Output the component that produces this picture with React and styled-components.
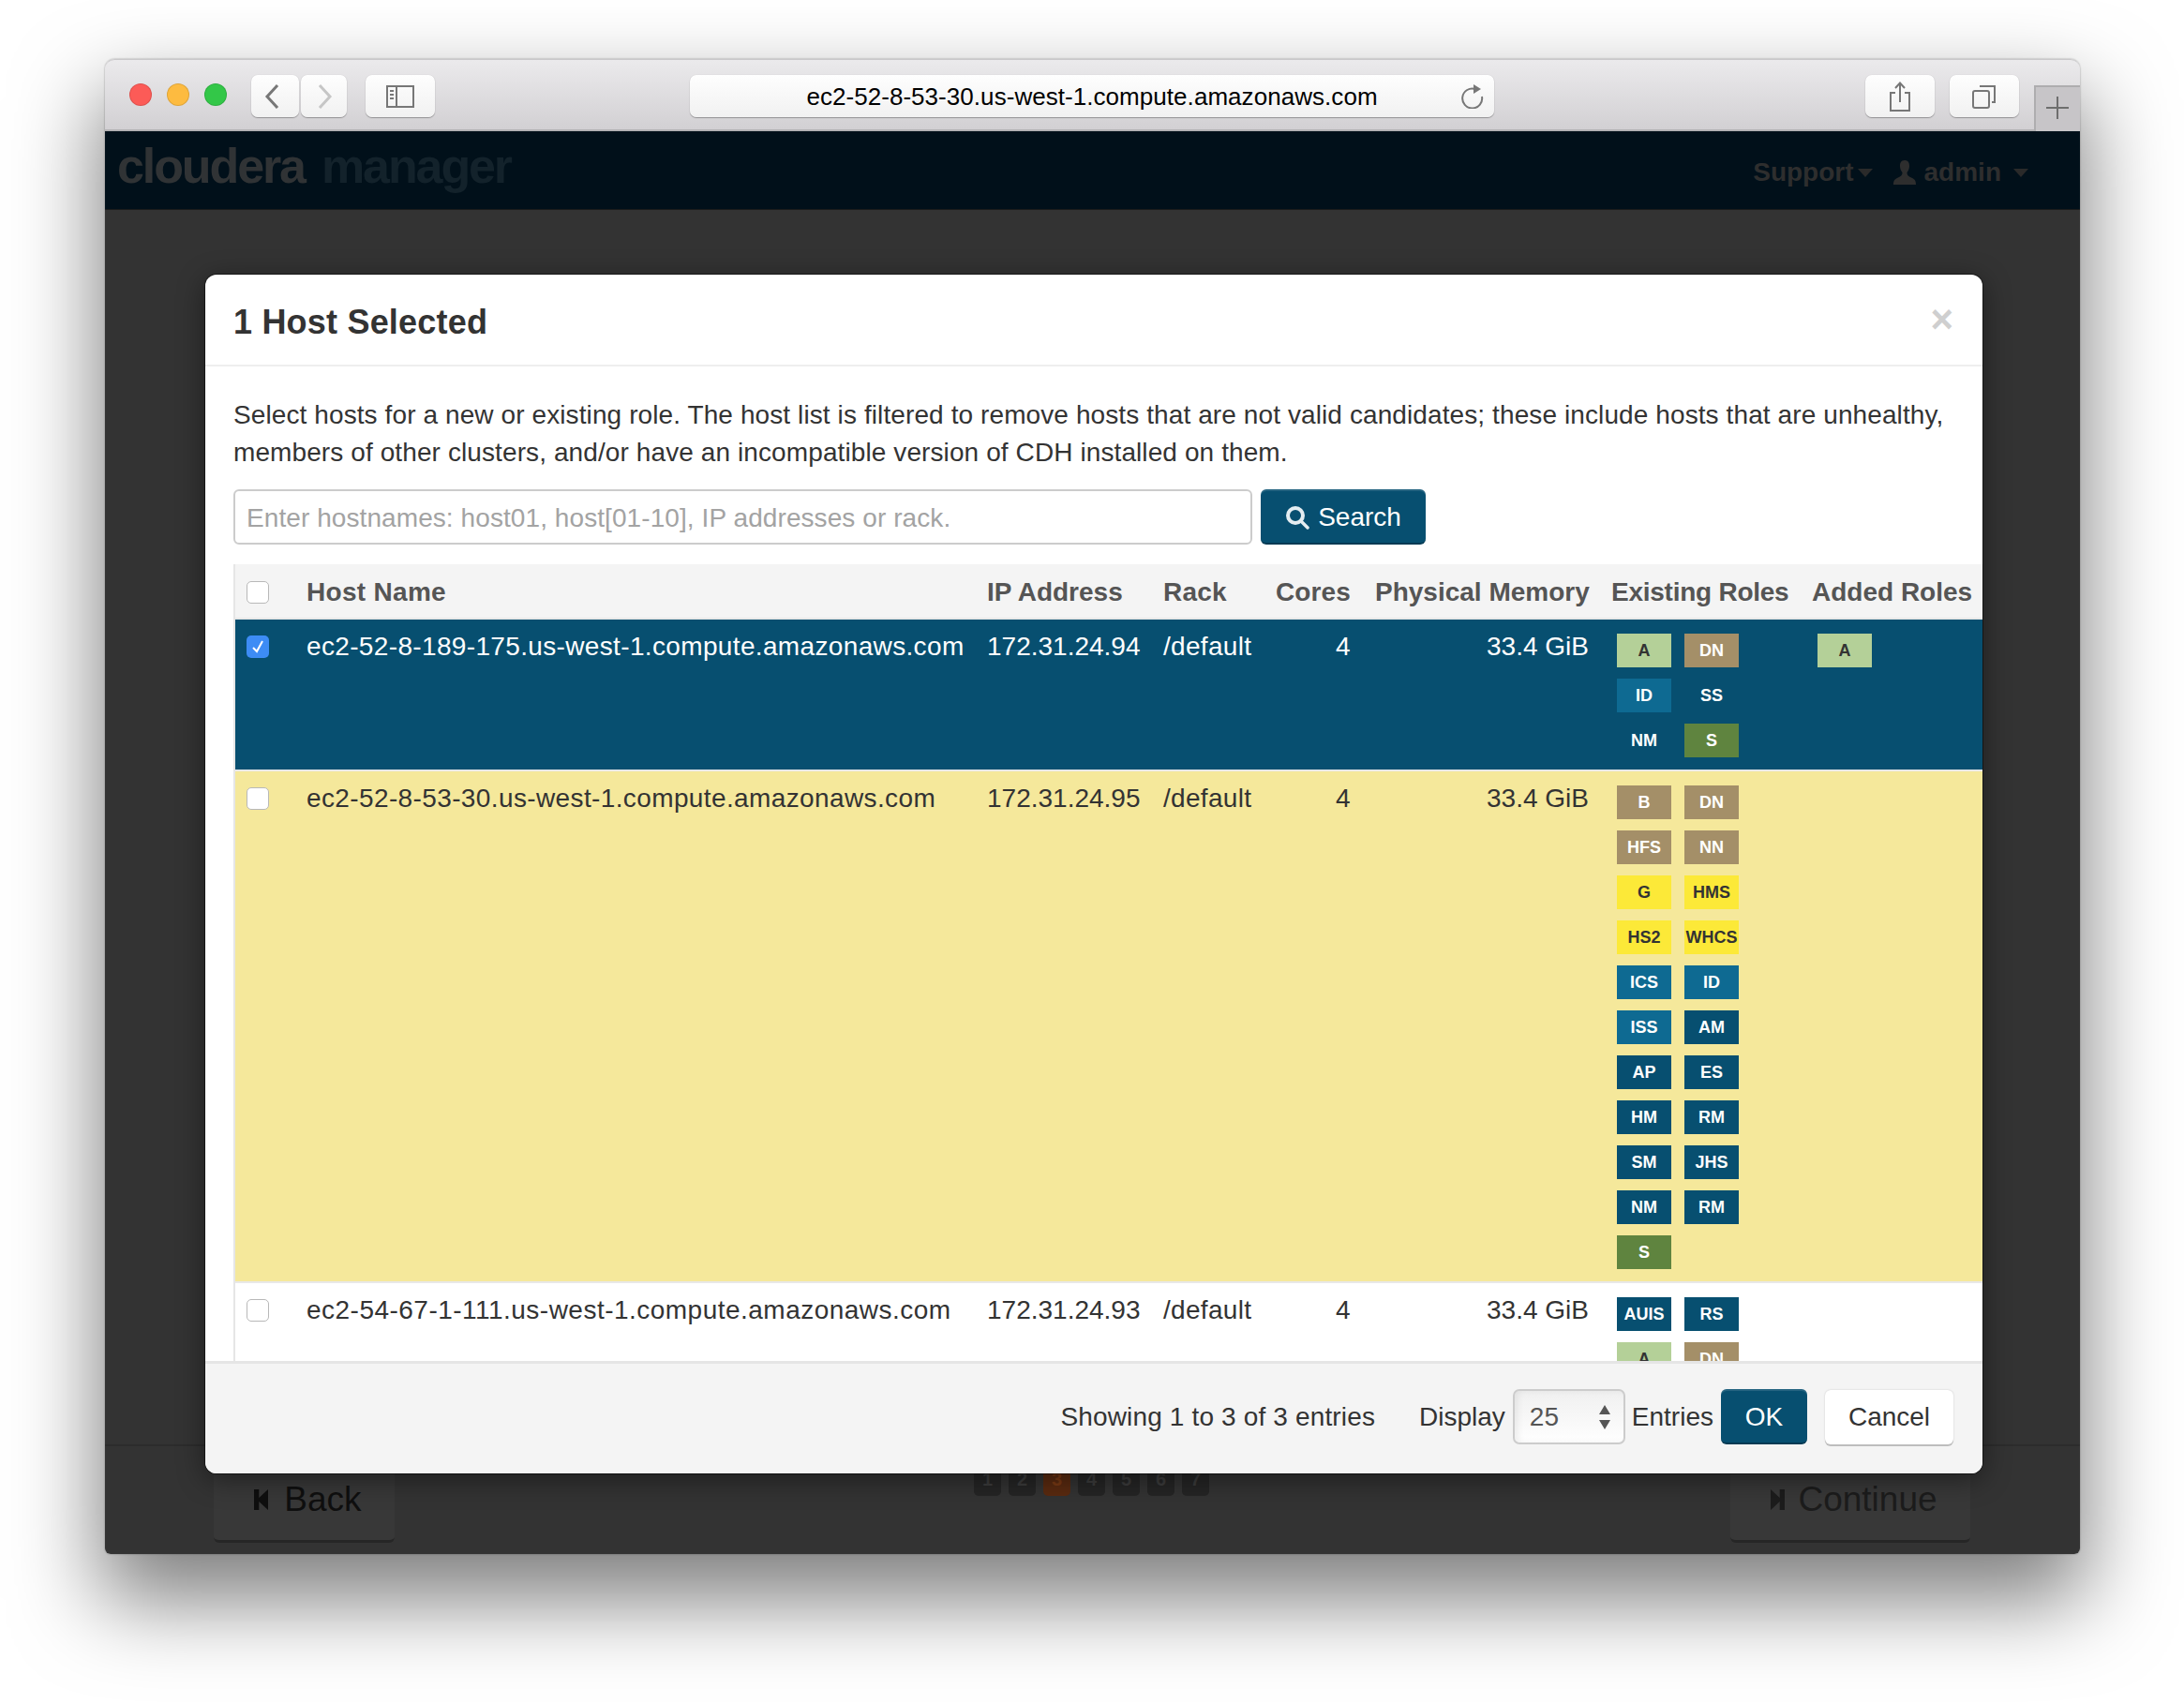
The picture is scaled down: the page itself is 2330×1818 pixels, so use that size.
import React from 'react';
import styled, { createGlobalStyle, css } from 'styled-components';

const colors = {
  navy: '#074f70',
  teal: '#0e6a92',
  tan: '#a48f68',
  lime: '#b4d098',
  moss: '#5f843f',
  yellow: '#fce938',
  cream: '#f5e89b',
  text: '#333333',
  panel: '#f4f4f4',
};

const GlobalStyle = createGlobalStyle`
  html, body {
    margin: 0;
    background: #ffffff;
    font-family: "Liberation Sans", Arial, sans-serif;
    overflow: hidden;
  }
  * {
    box-sizing: border-box;
  }
`;

const Stage = styled.div`
  width: 2330px;
  height: 1818px;
  padding: 63px 111px 0 112px;
  overflow: hidden;
`;

const Window = styled.div`
  width: 2107px;
  height: 1595px;
  display: flex;
  flex-direction: column;
  border-radius: 10px 10px 6px 6px;
  box-shadow: 0 44px 90px 6px rgba(0, 0, 0, 0.5), 0 0 2px rgba(0, 0, 0, 0.4);
  overflow: visible;
`;

// Safari chrome
const TitleBar = styled.div`
  height: 77px;
  flex: none;
  display: flex;
  align-items: flex-start;
  padding-top: 16px;
  padding-left: 26px;
  background: linear-gradient(#ebeaec, #d2d0d3);
  border-top: 1px solid #c9c8ca;
  border-bottom: 2px solid #b3b2b4;
  border-radius: 10px 10px 0 0;
`;

const Light = styled.span`
  width: 24px;
  height: 24px;
  margin-top: 9px;
  margin-right: 16px;
  border-radius: 50%;
  background: ${(p) => p.$color};
  border: 1px solid rgba(0, 0, 0, 0.12);
`;

const ToolButton = styled.div`
  height: 45px;
  width: ${(p) => p.$w}px;
  flex: none;
  display: flex;
  align-items: center;
  justify-content: ${(p) => p.$justify || 'center'};
  padding: 0 ${(p) => p.$pad || 0}px;
  margin-left: ${(p) => p.$ml || 0}px;
  background: linear-gradient(#fefefe, #f1f1f1);
  border-radius: 7px;
  box-shadow: 0 1px 1px rgba(0, 0, 0, 0.3), 0 0 1px rgba(0, 0, 0, 0.2);
`;

const UrlBar = styled(ToolButton)`
  position: relative;
  padding-top: 2px;
  font-size: 26px;
  letter-spacing: 0.05px;
  color: #000000;
`;

const ReloadSlot = styled.span`
  position: absolute;
  right: 11px;
  top: 9px;
  display: flex;
`;

const NewTab = styled.div`
  width: 49px;
  height: 49px;
  flex: none;
  margin-left: 16px;
  align-self: flex-end;
  margin-bottom: -2px;
  padding-bottom: 4px;
  padding-right: 2px;
  display: flex;
  align-items: center;
  justify-content: center;
  background: #c7c5c8;
  border-top: 2px solid #aeadaf;
  border-left: 2px solid #aeadaf;
`;

const Page = styled.div`
  position: relative;
  flex: 1;
  min-height: 0;
  display: flex;
  flex-direction: column;
  background: #333333;
  border-radius: 0 0 6px 6px;
`;

const Nav = styled.div`
  height: 84px;
  flex: none;
  display: flex;
  align-items: center;
  justify-content: space-between;
  padding: 0 55px 0 13px;
  background: #01101a;
  border-bottom: 1px solid #1b1b1b;
`;

const Logo = styled.div`
  display: flex;
  align-items: baseline;
  gap: 18px;
  font-size: 52px;
  font-weight: 700;
  letter-spacing: -2.1px;
  line-height: 60px;
  margin-top: -10px;
`;

const LogoWord = styled.span`
  color: ${(p) => p.$color};
`;

const NavMenu = styled.div`
  display: flex;
  align-items: center;
  margin-top: 5px;
  font-size: 28px;
  font-weight: 700;
  color: #2e2e2e;
`;

const NavCaret = styled.span`
  width: 0;
  height: 0;
  margin-left: ${(p) => p.$ml}px;
  margin-right: ${(p) => p.$mr}px;
  border-left: 8px solid transparent;
  border-right: 8px solid transparent;
  border-top: 9px solid #2a2a2a;
`;

const NavIcon = styled.svg`
  margin-right: 9px;
`;

const Spacer = styled.div`
  flex: 1;
`;

const BottomBar = styled.div`
  height: 117px;
  flex: none;
  display: flex;
  align-items: flex-start;
  padding: 19px 117px 0 116px;
  border-top: 2px solid #2c2c2c;
`;

const WizardButton = styled.div`
  height: 84px;
  width: ${(p) => p.$w}px;
  display: flex;
  align-items: center;
  justify-content: center;
  gap: ${(p) => p.$gap}px;
  padding-bottom: 6px;
  padding-left: ${(p) => p.$pl || 0}px;
  background: #383838;
  border-radius: 6px;
  border-bottom: 3px solid #262626;
  font-size: 37px;
  color: ${(p) => p.$color};
`;

const Pager = styled.div`
  display: flex;
  gap: 8px;
  margin-left: 618px;
  margin-right: auto;
`;

const PagerDot = styled.span`
  width: 29px;
  height: 34px;
  padding-top: 5px;
  text-align: center;
  font-size: 20px;
  font-weight: 700;
  border-radius: 5px;
  color: ${(p) => (p.$active ? '#7a3a14' : '#3c3c3c')};
  background: ${(p) => (p.$active ? '#5a2a10' : '#252525')};
`;

// modal sits over the dimmed page
const Modal = styled.div`
  position: absolute;
  left: 107px;
  top: 153px;
  width: 1896px;
  height: 1279px;
  display: flex;
  flex-direction: column;
  background: #ffffff;
  border-radius: 12px;
  box-shadow: 0 0 0 1px rgba(0, 0, 0, 0.45), 0 6px 30px rgba(0, 0, 0, 0.45);
  overflow: hidden;
`;

const ModalHeader = styled.div`
  height: 98px;
  flex: none;
  display: flex;
  align-items: center;
  justify-content: space-between;
  padding: 6px 31px 0 30px;
  border-bottom: 2px solid #eeeeee;
`;

const ModalTitle = styled.h3`
  margin: 0;
  font-size: 36px;
  font-weight: 700;
  letter-spacing: 0.2px;
  color: ${colors.text};
`;

const Close = styled.span`
  font-size: 42px;
  font-weight: 700;
  line-height: 1;
  color: #cfcfcf;
  margin-top: -6px;
`;

const Intro = styled.p`
  margin: 0;
  padding: 32px 30px 19px;
  font-size: 28px;
  line-height: 40px;
  letter-spacing: 0.1px;
  color: ${colors.text};
`;

const SearchRow = styled.div`
  display: flex;
  gap: 9px;
  padding: 0 30px;
  margin-bottom: 21px;
`;

const SearchInput = styled.input`
  width: 1087px;
  height: 59px;
  padding: 2px 12px 0;
  font: 28px "Liberation Sans", Arial, sans-serif;
  letter-spacing: 0.08px;
  border: 2px solid #cccccc;
  border-radius: 6px;
  outline: none;
  &::placeholder {
    color: #a3a3a3;
    opacity: 1;
  }
`;

const PrimaryButton = styled.button`
  height: 59px;
  width: ${(p) => p.$w}px;
  display: flex;
  align-items: center;
  justify-content: center;
  gap: 9px;
  padding: 2px 0 0;
  font: 28px "Liberation Sans", Arial, sans-serif;
  color: #ffffff;
  background: ${colors.navy};
  border: none;
  border-bottom: 2px solid #043a53;
  border-radius: 6px;
  box-shadow: inset 0 2px 0 rgba(255, 255, 255, 0.12);
`;

const Table = styled.div`
  flex: 1;
  min-height: 0;
  margin-left: 30px;
  border-left: 2px solid #e6e6e6;
  overflow: hidden;
`;

const columns = css`
  display: grid;
  grid-template-columns: 40px 702px 163px 97px 82px 228px 190px 1fr;
  column-gap: 24px;
  padding-left: 12px;
`;

const HeadRow = styled.div`
  ${columns}
  height: 59px;
  align-items: center;
  background: ${colors.panel};
  font-size: 28px;
  font-weight: 700;
  color: #555555;
  white-space: nowrap;
`;

const HeadCell = styled.div`
  letter-spacing: ${(p) => p.$ls || 0}px;
  padding-left: ${(p) => p.$pl || 0}px;
`;

const Row = styled.div`
  ${columns}
  padding-top: 15px;
  padding-bottom: 13px;
  margin-top: ${(p) => (p.$first ? 0 : 2)}px;
  font-size: 28px;
  line-height: 28px;
  white-space: nowrap;
  background: ${(p) => p.$bg};
  color: ${(p) => p.$fg};
  box-shadow: 0 -2px 0 #e8e8e8;
`;

const HostCell = styled.div`
  letter-spacing: ${(p) => p.$ls}px;
`;

const RackCell = styled.div`
  padding-left: 1px;
  letter-spacing: 0.3px;
`;

const Right = styled.div`
  text-align: right;
`;

const CoreCell = styled.div`
  padding-left: 64px;
`;

const Check = styled.span`
  display: flex;
  align-items: center;
  justify-content: center;
  width: 24px;
  height: 24px;
  margin-top: ${(p) => p.$mt || 0}px;
  border-radius: 5px;
  background: ${(p) => (p.$on ? '#3d8cf5' : '#ffffff')};
  border: ${(p) => (p.$on ? 'none' : '1px solid #b8b8b8')};
`;

const BadgeGrid = styled.div`
  display: grid;
  grid-template-columns: 58px 58px;
  column-gap: 14px;
  row-gap: 12px;
  margin-left: 6px;
  align-content: start;
`;

const Badge = styled.span`
  height: 36px;
  display: flex;
  align-items: center;
  justify-content: center;
  padding-bottom: 1px;
  font-size: 18px;
  line-height: 1;
  font-weight: 700;
  color: ${(p) => (p.$kind === 'lime' || p.$kind === 'yellow' ? '#333333' : '#ffffff')};
  background: ${(p) => colors[p.$kind]};
`;

const Footer = styled.div`
  height: 120px;
  flex: none;
  display: flex;
  align-items: center;
  justify-content: flex-end;
  padding-right: 31px;
  padding-bottom: 4px;
  background: ${colors.panel};
  border-top: 3px solid #e5e5e5;
  font-size: 28px;
  color: ${colors.text};
`;

const FooterText = styled.span`
  margin-right: ${(p) => p.$mr}px;
  letter-spacing: ${(p) => p.$ls || 0}px;
`;

const PageSize = styled.div`
  width: 120px;
  height: 59px;
  margin-right: 7px;
  padding-left: 16px;
  padding-right: 13px;
  display: flex;
  align-items: center;
  justify-content: space-between;
  color: #555555;
  background: linear-gradient(#f0f0f0, #f7f7f7 50%, #ffffff);
  border: 2px solid #cccccc;
  border-radius: 7px;
  box-shadow: inset 4px 0 6px rgba(0, 0, 0, 0.06);
`;

const CancelButton = styled.button`
  width: 137px;
  height: 58px;
  margin-left: 19px;
  padding: 0;
  font: 28px "Liberation Sans", Arial, sans-serif;
  color: ${colors.text};
  background: #ffffff;
  border: none;
  border-radius: 6px;
  box-shadow: 0 2px 0 #bdbdbd, 0 0 2px rgba(0, 0, 0, 0.2);
`;

const hosts = [
  {
    name: 'ec2-52-8-189-175.us-west-1.compute.amazonaws.com',
    ip: '172.31.24.94',
    bg: colors.navy,
    fg: '#ffffff',
    ls: 0.35,
    roles: [['A', 'lime'], ['DN', 'tan'], ['ID', 'teal'], ['SS', 'navy'], ['NM', 'navy'], ['S', 'moss']],
    added: [['A', 'lime']],
    checked: true,
  },
  {
    name: 'ec2-52-8-53-30.us-west-1.compute.amazonaws.com',
    ip: '172.31.24.95',
    bg: colors.cream,
    fg: colors.text,
    ls: 0.38,
    roles: [
      ['B', 'tan'], ['DN', 'tan'], ['HFS', 'tan'], ['NN', 'tan'],
      ['G', 'yellow'], ['HMS', 'yellow'], ['HS2', 'yellow'], ['WHCS', 'yellow'],
      ['ICS', 'teal'], ['ID', 'teal'], ['ISS', 'teal'], ['AM', 'navy'],
      ['AP', 'navy'], ['ES', 'navy'], ['HM', 'navy'], ['RM', 'navy'],
      ['SM', 'navy'], ['JHS', 'navy'], ['NM', 'navy'], ['RM', 'navy'], ['S', 'moss'],
    ],
    added: [],
  },
  {
    name: 'ec2-54-67-1-111.us-west-1.compute.amazonaws.com',
    ip: '172.31.24.93',
    bg: '#ffffff',
    fg: colors.text,
    ls: 0.48,
    roles: [['AUIS', 'navy'], ['RS', 'navy'], ['A', 'lime'], ['DN', 'tan']],
    added: [],
  },
];

const Chevron = ({ d, color }) => (
  <svg width="18" height="26" viewBox="0 0 18 26">
    <path d={d} fill="none" stroke={color} strokeWidth="3" />
  </svg>
);

const StepIcon = ({ d, color }) => (
  <svg width="15" height="22" viewBox="0 0 17 22" fill={color} preserveAspectRatio="none">
    <path d={d} />
  </svg>
);

const App = () => (
  <Stage>
    <GlobalStyle />
    <Window>
      <TitleBar>
        <Light $color="#fc5b57" />
        <Light $color="#fdbb40" />
        <Light $color="#33c748" />
        <ToolButton $w={51} $ml={10} $justify="flex-start" $pad={13}>
          <Chevron d="M15 1 L4 13 L15 25" color="#777777" />
        </ToolButton>
        <ToolButton $w={49} $ml={2} $justify="flex-end" $pad={14}>
          <Chevron d="M3 1 L14 13 L3 25" color="#c6c6c6" />
        </ToolButton>
        <ToolButton $w={74} $ml={20}>
          <svg width="30" height="24" viewBox="0 0 30 24" fill="none" stroke="#777777" strokeWidth="2">
            <rect x="1" y="1" width="28" height="22" />
            <path d="M11 1 V23" />
            <path d="M4 6 H8 M4 10 H8 M4 14 H8" />
          </svg>
        </ToolButton>
        <UrlBar $w={858} $ml={272}>
          ec2-52-8-53-30.us-west-1.compute.amazonaws.com
          <ReloadSlot>
            <svg width="24" height="27" viewBox="0 0 24 27" fill="none" stroke="#777777" strokeWidth="2">
              <path d="M15 6 A10.5 10.5 0 1 0 22 14" />
              <path d="M13 1 L21 6 L13 11 Z" fill="#777777" stroke="none" />
            </svg>
          </ReloadSlot>
        </UrlBar>
        <ToolButton $w={74} $ml={396}>
          <svg width="24" height="32" viewBox="0 0 24 32" fill="none" stroke="#777777" strokeWidth="2">
            <path d="M7 12 H2 V31 H22 V12 H17" />
            <path d="M12 22 V2 M7 7 L12 1.5 L17 7" />
          </svg>
        </ToolButton>
        <ToolButton $w={74} $ml={16}>
          <svg width="26" height="26" viewBox="0 0 26 26" fill="none" stroke="#777777" strokeWidth="2">
            <rect x="1" y="7" width="17" height="18" rx="2" />
            <path d="M8 2 H24 V19 H21" />
          </svg>
        </ToolButton>
        <NewTab>
          <svg width="24" height="24" viewBox="0 0 24 24" stroke="#6e6e6e" strokeWidth="2">
            <path d="M12 0 V24 M0 12 H24" />
          </svg>
        </NewTab>
      </TitleBar>
      <Page>
        <Nav>
          <Logo>
            <LogoWord $color="#303335">cloudera</LogoWord>
            <LogoWord $color="#13222b">manager</LogoWord>
          </Logo>
          <NavMenu>
            Support
            <NavCaret $ml={4} $mr={22} />
            <NavIcon width="24" height="26" viewBox="0 0 24 26" fill="#2e2e2e">
              <path d="M12 0 C8 0 7 3 7 6 C7 9 8 11 9.5 13 C9.5 16 8 17 4 19 C1 20.5 0 22 0 26 H24 C24 22 23 20.5 20 19 C16 17 14.5 16 14.5 13 C16 11 17 9 17 6 C17 3 16 0 12 0 Z" />
            </NavIcon>
            admin
            <NavCaret $ml={13} $mr={0} />
          </NavMenu>
        </Nav>
        <Spacer />
        <BottomBar>
          <WizardButton $w={193} $pl={8} $gap={17} $color="#0f0f0f">
            <StepIcon d="M0 0 H6 V9 L17 0 V22 L6 13 V22 H0 Z" color="#0f0f0f" />
            Back
          </WizardButton>
          <Pager>
            {[1, 2, 3, 4, 5, 6, 7].map((n) => (
              <PagerDot key={n} $active={n === 3}>{n}</PagerDot>
            ))}
          </Pager>
          <WizardButton $w={256} $pl={8} $gap={14} $color="#1c1c1c">
            <StepIcon d="M17 0 H11 V9 L0 0 V22 L11 13 V22 H17 Z" color="#1c1c1c" />
            Continue
          </WizardButton>
        </BottomBar>

        <Modal>
          <ModalHeader>
            <ModalTitle>1 Host Selected</ModalTitle>
            <Close>×</Close>
          </ModalHeader>
          <Intro>
            Select hosts for a new or existing role. The host list is filtered to remove hosts that are not valid candidates; these include hosts that are unhealthy,
            <br />
            members of other clusters, and/or have an incompatible version of CDH installed on them.
          </Intro>
          <SearchRow>
            <SearchInput placeholder="Enter hostnames: host01, host[01-10], IP addresses or rack." readOnly />
            <PrimaryButton $w={176}>
              <svg width="26" height="26" viewBox="0 0 26 26" fill="none" stroke="#e4edf1">
                <circle cx="11" cy="11" r="8" strokeWidth="4" />
                <path d="M17 17 L24 24" strokeWidth="3.5" strokeLinecap="round" />
              </svg>
              Search
            </PrimaryButton>
          </SearchRow>
          <Table>
            <HeadRow>
              <Check />
              <HeadCell $ls={0.3}>Host Name</HeadCell>
              <HeadCell>IP Address</HeadCell>
              <HeadCell $pl={1} $ls={0.2}>Rack</HeadCell>
              <HeadCell $ls={0.1}>Cores</HeadCell>
              <HeadCell>Physical Memory</HeadCell>
              <HeadCell $ls={-0.25}>Existing Roles</HeadCell>
              <HeadCell>Added Roles</HeadCell>
            </HeadRow>
            {hosts.map((host, i) => (
              <Row key={host.name} $bg={host.bg} $fg={host.fg} $first={i === 0}>
                <Check $on={host.checked} $mt={2}>
                  {host.checked && (
                    <svg width="14" height="14" viewBox="0 0 14 14" fill="none" stroke="#ffffff" strokeWidth="2">
                      <path d="M2 8 L6 12 L12 1" />
                    </svg>
                  )}
                </Check>
                <HostCell $ls={host.ls}>{host.name}</HostCell>
                <div>{host.ip}</div>
                <RackCell>/default</RackCell>
                <CoreCell>4</CoreCell>
                <Right>33.4 GiB</Right>
                <BadgeGrid>
                  {host.roles.map(([label, kind], j) => (
                    <Badge key={j} $kind={kind}>{label}</Badge>
                  ))}
                </BadgeGrid>
                <BadgeGrid>
                  {host.added.map(([label, kind], j) => (
                    <Badge key={j} $kind={kind}>{label}</Badge>
                  ))}
                </BadgeGrid>
              </Row>
            ))}
          </Table>
          <Footer>
            <FooterText $mr={47} $ls={0.15}>Showing 1 to 3 of 3 entries</FooterText>
            <FooterText $mr={8}>Display</FooterText>
            <PageSize>
              25
              <svg width="14" height="26" viewBox="0 0 14 26" fill="#555555">
                <path d="M7 0 L13 10 H1 Z M7 26 L13 16 H1 Z" />
              </svg>
            </PageSize>
            <FooterText $mr={8}>Entries</FooterText>
            <PrimaryButton $w={92}>OK</PrimaryButton>
            <CancelButton>Cancel</CancelButton>
          </Footer>
        </Modal>
      </Page>
    </Window>
  </Stage>
);

export default App;
